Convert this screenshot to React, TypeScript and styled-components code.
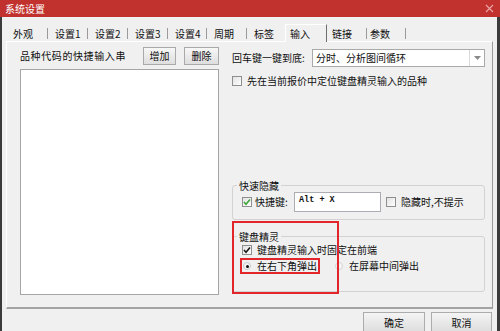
import React from "react";
import styled, { createGlobalStyle } from "styled-components";

const GlobalStyle = createGlobalStyle`
  html, body {
    margin: 0;
    padding: 0;
    background: #f0f0f0;
    overflow: hidden;
  }
  * {
    box-sizing: border-box;
  }
`;

const FONT = `"Noto Sans CJK SC", "Noto Sans", sans-serif`;

const Window = styled.div`
  width: 500px;
  height: 331px;
  display: flex;
  flex-direction: column;
  overflow: hidden;
  background: #f0f0f0;
  font-family: ${FONT};
  font-size: 10px;
  line-height: 12px;
  color: #0f0f0f;
`;

const TitleBar = styled.div`
  flex: none;
  height: 17px;
  display: flex;
  align-items: center;
  justify-content: space-between;
  padding: 0 6px 0 5px;
  background: #c1312d;
  color: #ffffff;
`;

const Frame = styled.div`
  flex: 1;
  display: flex;
  flex-direction: column;
  padding: 0 4px;
  border-left: 2px solid #3b3b3b;
  border-right: 3px solid #3b3b3b;
`;

const TabRow = styled.div`
  flex: none;
  height: 24px;
  display: flex;
  align-items: flex-end;
`;

const Tab = styled.div<{ $w: number; $sep?: boolean; $pl?: number }>`
  width: ${(p) => p.$w}px;
  height: 11px;
  margin-bottom: 2px;
  padding-left: ${(p) => p.$pl ?? 7}px;
  line-height: 11px;
  white-space: nowrap;
  border-right: ${(p) => (p.$sep ? "1px solid #9a9a9a" : "none")};
`;

const ActiveTab = styled.div`
  width: 42px;
  height: 18px;
  margin-bottom: -1px;
  padding-left: 4px;
  display: flex;
  align-items: center;
  white-space: nowrap;
  background: #f0f0f0;
  border-top: 1px solid #ffffff;
  border-left: 1px solid #ffffff;
  border-right: 1px solid #6e6e6e;
  position: relative;
  z-index: 1;
`;

const Panel = styled.div`
  flex: none;
  height: 268px;
  display: flex;
  gap: 13px;
  padding: 5px 7px 12px 13px;
  border-style: solid;
  border-width: 1px 1px 2px 1px;
  border-color: #ffffff #9c9c9c #a3a3a3 #ffffff;
`;

const LeftCol = styled.div`
  width: 199px;
  flex: none;
  display: flex;
  flex-direction: column;
`;

const ListHeader = styled.div`
  height: 18px;
  display: flex;
  align-items: center;
`;

const HeaderLabel = styled.div`
  flex: 1;
  white-space: nowrap;
  letter-spacing: 0.6px;
`;

const SmallButton = styled.div<{ $w: number; $ml?: number }>`
  width: ${(p) => p.$w}px;
  height: 18px;
  margin-left: ${(p) => p.$ml ?? 0}px;
  display: flex;
  align-items: center;
  justify-content: center;
  border: 1px solid #a9a9a9;
  background: linear-gradient(#f7f7f7, #dedede);
`;

const ListBox = styled.div`
  flex: 1;
  margin-top: 4px;
  background: #ffffff;
  border: 1px solid #a5a5a5;
`;

const RightCol = styled.div`
  flex: 1;
  min-width: 0;
  display: flex;
  flex-direction: column;
`;

const FieldRow = styled.div`
  height: 18px;
  margin-top: 2px;
  display: flex;
  align-items: center;
`;

const FieldLabel = styled.div`
  width: 80px;
  white-space: nowrap;
`;

const Select = styled.div`
  flex: 1;
  height: 18px;
  display: flex;
  background: #ffffff;
  border: 1px solid #a9a9a9;
`;

const SelectText = styled.div`
  flex: 1;
  padding-left: 3px;
  display: flex;
  align-items: center;
  white-space: nowrap;
`;

const SelectArrow = styled.div`
  width: 15px;
  display: flex;
  align-items: center;
  justify-content: center;
  border-left: 1px solid #dadada;
`;

const CheckRow = styled.label<{ $mt?: number; $h?: number }>`
  height: ${(p) => p.$h ?? 11}px;
  margin-top: ${(p) => p.$mt ?? 0}px;
  display: flex;
  align-items: center;
  gap: 5px;
  white-space: nowrap;
`;

const Box = styled.span`
  width: 10px;
  height: 10px;
  flex: none;
  display: flex;
  align-items: center;
  justify-content: center;
  border: 1px solid #8e8f8f;
  background: linear-gradient(135deg, #e2e2e2, #ffffff);
`;

const Groups = styled.div`
  margin-top: auto;
  margin-bottom: 3px;
  display: flex;
  flex-direction: column;
`;

const Group = styled.fieldset<{ $pb: number }>`
  margin: 0;
  min-width: 0;
  padding: 0 8px ${(p) => p.$pb}px 9px;
  border: 1px solid #d2d2d2;
  border-radius: 3px;
`;

const Legend = styled.legend`
  margin-left: -5px;
  padding: 0 2px;
  line-height: 13px;
`;

const HotkeyRow = styled.div`
  height: 20px;
  display: flex;
  align-items: center;
`;

const HotkeyLabel = styled.span`
  width: 39px;
  margin-left: 3px;
  white-space: nowrap;
`;

const HotkeyInput = styled.div`
  width: 87px;
  height: 20px;
  margin-right: 5px;
  padding: 2px 4px;
  background: #ffffff;
  border: 1px solid #abadb3;
  font-family: "Liberation Mono", "DejaVu Sans Mono", monospace;
  font-size: 8.5px;
  font-weight: bold;
  line-height: 10px;
  white-space: pre;
`;

const HighlightWrap = styled.div`
  margin-top: 10px;
  position: relative;
`;

const Highlight = styled.div`
  position: absolute;
  top: -9px;
  left: 0;
  width: 107px;
  height: 73px;
  border: 2px solid #e1252a;
  pointer-events: none;
`;

const RadioRow = styled.div`
  height: 16px;
  margin-top: 2px;
  display: flex;
  align-items: center;
`;

const RadioOption = styled.label<{ $marked?: boolean; $ml?: number }>`
  height: 16px;
  margin-left: ${(p) => p.$ml ?? 0}px;
  padding: 0 1px 0 1px;
  display: flex;
  align-items: center;
  gap: 6px;
  white-space: nowrap;
  border: 2px solid ${(p) => (p.$marked ? "#e1252a" : "transparent")};
`;

const RadioDot = styled.span<{ $on?: boolean }>`
  width: 8px;
  height: 8px;
  flex: none;
  border-radius: 50%;
  display: flex;
  align-items: center;
  justify-content: center;
  border: 1px solid ${(p) => (p.$on ? "#c9c9c9" : "#d6d6d6")};
  background: #f4f4f4;
  &::after {
    content: "";
    width: 3px;
    height: 3px;
    border-radius: 50%;
    background: ${(p) => (p.$on ? "#111111" : "transparent")};
  }
`;

const Footer = styled.div`
  display: flex;
  justify-content: flex-end;
  gap: 6px;
  padding: 3px 1px 0 0;
`;

const FooterButton = styled.div<{ $w: number }>`
  width: ${(p) => p.$w}px;
  height: 21px;
  display: flex;
  align-items: center;
  justify-content: center;
  border: 1px solid #acacac;
  background: linear-gradient(#f4f4f4, #dddddd);
`;

const Check = ({ color }: { color: string }) => (
  <svg width="8" height="8" viewBox="0 0 8 8">
    <path d="M1 4 L3 6.2 L7 1.5" fill="none" stroke={color} strokeWidth="1.6" />
  </svg>
);

const Checkbox = ({ checked, color = "#222" }: { checked?: boolean; color?: string }) => (
  <Box>{checked && <Check color={color} />}</Box>
);

const tabs: { label: string; w: number; sep: boolean }[] = [
  { label: "外观", w: 42, sep: true },
  { label: "设置1", w: 40, sep: true },
  { label: "设置2", w: 40, sep: true },
  { label: "设置3", w: 40, sep: true },
  { label: "设置4", w: 39, sep: true },
  { label: "周期", w: 40, sep: true },
  { label: "标签", w: 38, sep: false },
];

const App = () => {
  return (
    <>
      <GlobalStyle />
      <Window>
        <TitleBar>
          <span>系统设置</span>
          <svg width="9" height="9" viewBox="0 0 9 9">
            <path d="M1 1 L8 8 M8 1 L1 8" stroke="#eaa4a4" strokeWidth="1.2" />
          </svg>
        </TitleBar>
        <Frame>
          <TabRow>
            {tabs.map((t) => (
              <Tab key={t.label} $w={t.w} $sep={t.sep}>
                {t.label}
              </Tab>
            ))}
            <ActiveTab>输入</ActiveTab>
            <Tab $w={40} $sep $pl={5}>
              链接
            </Tab>
            <Tab $w={39} $sep $pl={3}>
              参数
            </Tab>
          </TabRow>
          <Panel>
            <LeftCol>
              <ListHeader>
                <HeaderLabel>品种代码的快捷输入串</HeaderLabel>
                <SmallButton $w={33}>增加</SmallButton>
                <SmallButton $w={35} $ml={8}>
                  删除
                </SmallButton>
              </ListHeader>
              <ListBox />
            </LeftCol>
            <RightCol>
              <FieldRow>
                <FieldLabel>回车键一键到底:</FieldLabel>
                <Select>
                  <SelectText>分时、分析图间循环</SelectText>
                  <SelectArrow>
                    <svg width="7" height="4" viewBox="0 0 7 4">
                      <path d="M0 0 L7 0 L3.5 4 Z" fill="#8a8a8a" />
                    </svg>
                  </SelectArrow>
                </Select>
              </FieldRow>
              <CheckRow $mt={8}>
                <Checkbox />
                先在当前报价中定位键盘精灵输入的品种
              </CheckRow>
              <Groups>
                <Group $pb={7}>
                  <Legend>快速隐藏</Legend>
                  <HotkeyRow>
                    <Checkbox checked color="#3aa635" />
                    <HotkeyLabel>快捷键:</HotkeyLabel>
                    <HotkeyInput>Alt + X</HotkeyInput>
                    <CheckRow>
                      <Checkbox />
                      隐藏时,不提示
                    </CheckRow>
                  </HotkeyRow>
                </Group>
                <HighlightWrap>
                  <Group $pb={17}>
                    <Legend>键盘精灵</Legend>
                    <CheckRow $h={12} $mt={1}>
                      <Checkbox checked color="#1a1a1a" />
                      键盘精灵输入时固定在前端
                    </CheckRow>
                    <RadioRow>
                      <RadioOption $marked style={{ marginLeft: -2 }}>
                        <RadioDot $on />
                        在右下角弹出
                      </RadioOption>
                      <RadioOption $ml={12}>
                        <RadioDot />
                        在屏幕中间弹出
                      </RadioOption>
                    </RadioRow>
                  </Group>
                  <Highlight />
                </HighlightWrap>
              </Groups>
            </RightCol>
          </Panel>
          <Footer>
            <FooterButton $w={62}>确定</FooterButton>
            <FooterButton $w={61}>取消</FooterButton>
          </Footer>
        </Frame>
      </Window>
    </>
  );
};

export default App;
